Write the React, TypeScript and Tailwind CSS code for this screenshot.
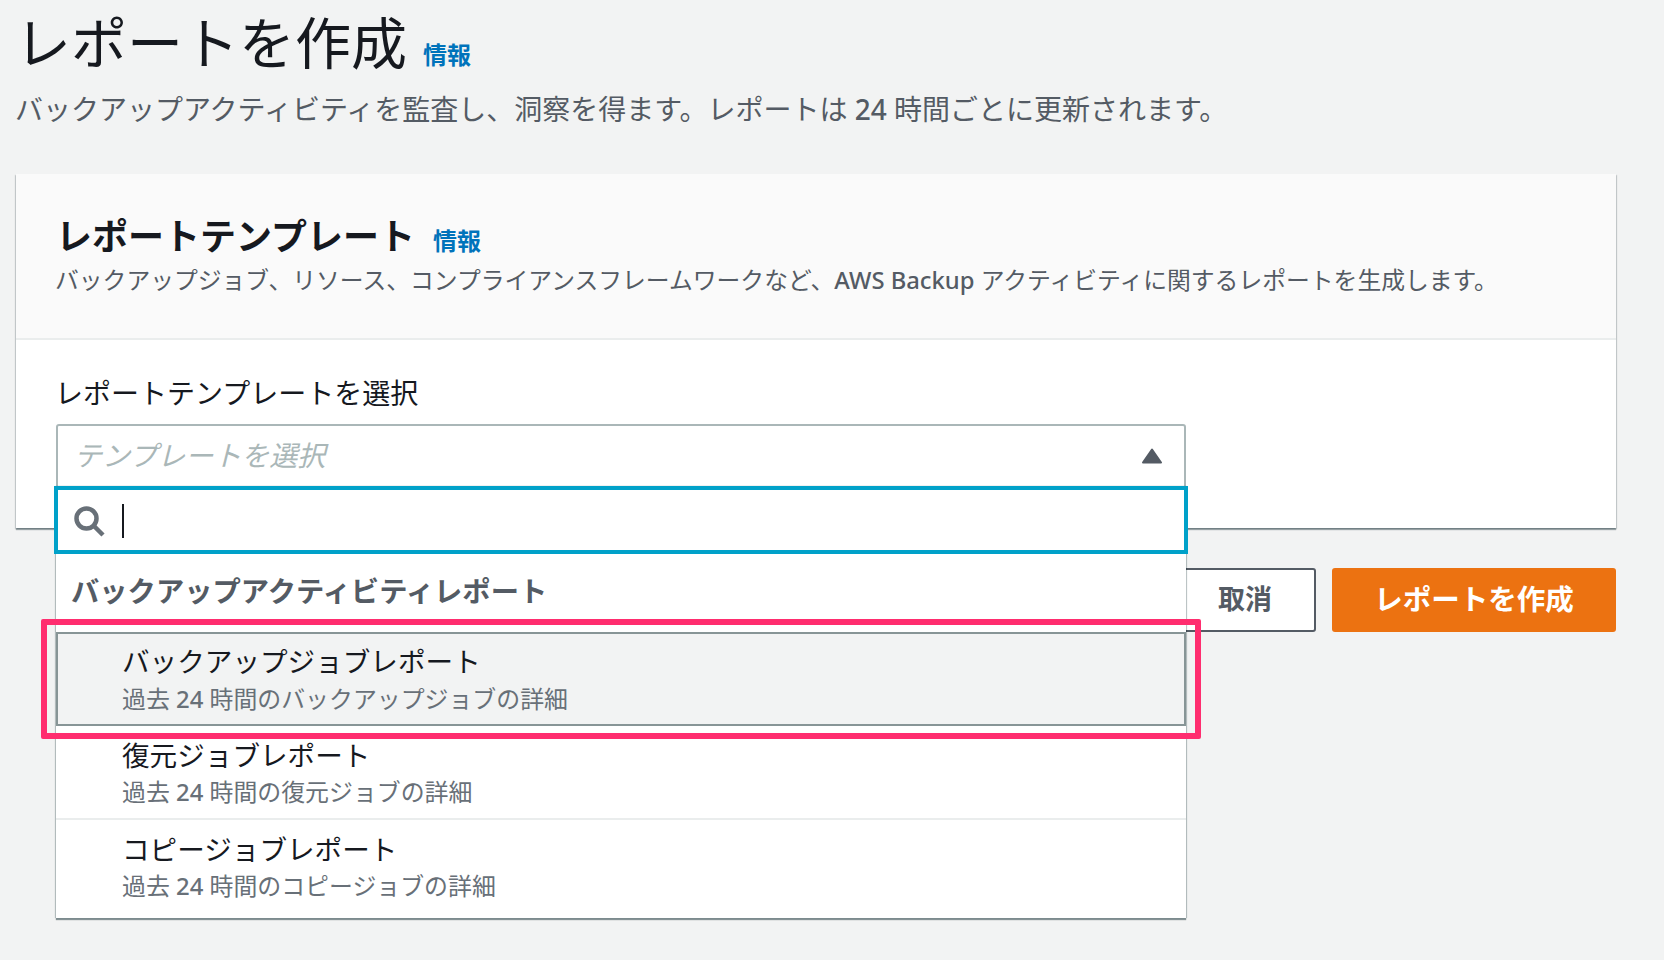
import React from "react";

const font = { fontFamily: '"Noto Sans", "Noto Sans CJK JP", sans-serif' };

function Option({ title, before, after, selected, divider }: { title: string; before: string; after: string; selected?: boolean; divider?: boolean }) {
  const base = "pr-4 flex flex-col ";
  const cls = selected
    ? base + "h-[94px] pl-[64px] pt-[7px] bg-[#f2f3f3] border-2 border-[#879596]"
    : base + (divider ? "h-[94px] pl-[66px] pt-[9px] border-b-2 border-[#eaeded]" : "h-[93px] pl-[66px] pt-[9px]");
  return (
    <div className={cls}>
      <div className="text-[27.6px] leading-[40px] text-[#16191f]">{title}</div>
      <div className={"text-[23.9px] leading-[34px] text-[#687078]" + (selected ? " mt-[1px]" : "")}>
        {before}<span className="font-medium">24</span>{after}
      </div>
    </div>
  );
}

export default function App() {
  return (
    <div style={font} className="w-[1664px] h-[960px] bg-[#f2f3f3] overflow-hidden relative pl-4 pr-12">
      <div className="flex items-baseline pt-[5px] h-[80px]">
        <h1 className="text-[56px] leading-[74px] text-[#16191f] -ml-px">レポートを作成</h1>
        <a className="text-[24px] font-bold text-[#0073bb] ml-[16px]">情報</a>
      </div>
      <p className="text-[28px] leading-[40px] text-[#545b64] mt-[9px] -ml-px">
        バックアップアクティビティを監査し、洞察を得ます。レポートは <span className="font-medium">24</span> 時間ごとに更新されます。
      </p>

      <section className="mt-[45px] bg-white shadow-[0_2px_1px_0_rgba(0,28,36,0.35),1px_1px_1px_0_rgba(0,28,36,0.15),-1px_1px_1px_0_rgba(0,28,36,0.15)]">
        <div className="h-[166px] bg-[#fafafa] border-b-2 border-[#eaeded] pl-[40px] pt-[38px]">
          <div className="flex items-baseline h-[50px]">
            <h2 className="text-[36px] leading-[50px] font-bold text-[#16191f]">レポートテンプレート</h2>
            <a className="text-[24px] font-bold text-[#0073bb] ml-[18px]">情報</a>
          </div>
          <p className="text-[23.8px] leading-[34px] text-[#545b64] -ml-px mt-[1px]">
            バックアップジョブ、リソース、コンプライアンスフレームワークなど、<span className="font-medium">AWS Backup</span> アクティビティに関するレポートを生成します。
          </p>
        </div>
        <div className="h-[188px] pl-[40px] pt-[33px] relative">
          <div className="text-[28px] leading-[40px] text-[#16191f] -ml-px">レポートテンプレートを選択</div>
          <div className="mt-[11px] w-[1130px] h-[66px] border-2 border-[#aab7b8] rounded-[3px] flex items-center justify-between pl-[16px] pr-[22px] pb-[4px]">
            <span className="text-[28px] italic text-[#aab7b8]">テンプレートを選択</span>
            <svg width="20" height="16" viewBox="0 0 20 16" className="mt-[2px]"><path d="M10 1.5 L19 14.5 H1 Z" fill="#545b64" stroke="#545b64" strokeWidth="2" strokeLinejoin="round" /></svg>
          </div>
        </div>
      </section>

      <div className="mt-[40px] flex justify-end gap-4">
        <button className="w-[142px] h-[64px] bg-white border-2 border-[#545b64] rounded-[3px] text-[27px] font-bold text-[#545b64] pb-[2px] flex items-center justify-center">取消</button>
        <button className="w-[284px] h-[64px] bg-[#ec7211] rounded-[3px] text-[28.5px] font-bold text-white pb-[2px]">レポートを作成</button>
      </div>

      <div className="absolute left-[56px] top-[486px] w-[1130px] h-[432px] bg-white shadow-[0_2px_1px_0_rgba(0,28,36,0.45),1px_0_1px_0_rgba(0,28,36,0.2),-1px_0_1px_0_rgba(0,28,36,0.2)]">
        <div className="h-[68px] -mx-[2px] border-4 border-[#00a1c9] flex items-center pl-[15px] pt-[2px] bg-white">
          <svg width="32" height="32" viewBox="0 0 32 32" fill="none" stroke="#687078" strokeWidth="4.5"><circle cx="13.5" cy="13.5" r="10" /><path d="M21 21 L30 30" /></svg>
          <div className="w-[2px] h-[34px] bg-[#16191f] ml-[17px]" />
        </div>
        <div className="h-[78px] flex items-center pl-[15px] pb-[4px] text-[28.3px] font-bold text-[#545b64]">バックアップアクティビティレポート</div>
        <Option selected title="バックアップジョブレポート" before="過去 " after=" 時間のバックアップジョブの詳細" />
        <Option divider title="復元ジョブレポート" before="過去 " after=" 時間の復元ジョブの詳細" />
        <Option title="コピージョブレポート" before="過去 " after=" 時間のコピージョブの詳細" />
      </div>

      <div className="absolute left-[41px] top-[619px] w-[1160px] h-[120px] border-[6px] border-[#ff2d6f] rounded-[2px]" />
    </div>
  );
}
